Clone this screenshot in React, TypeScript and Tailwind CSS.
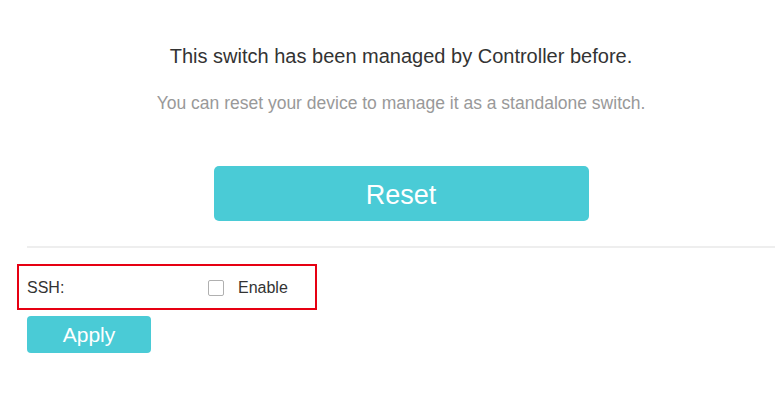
export default function App() {
  return (
    <div className="w-[775px] h-[400px] bg-white font-['Liberation_Sans',Arial,sans-serif] overflow-hidden">
      <div className="pl-[27px] pt-[44px]">
        <div className="flex flex-col items-center">
          <p className="text-[20px] leading-[24px] text-[#333]">
            This switch has been managed by Controller before.
          </p>
          <p className="mt-[24px] text-[17.5px] leading-[22px] text-[#999]">
            You can reset your device to manage it as a standalone switch.
          </p>
          <button className="mt-[52px] w-[375px] h-[55px] pt-[3px] rounded-[5px] bg-[#4acbd6] text-white text-[27px] leading-none">
            Reset
          </button>
        </div>

        <hr className="mt-[25px] border-0 border-t-2 border-[#eeeeee]" />

        <div className="mt-[16px] -ml-[10px] w-[300px] h-[46px] pt-[2px] border-2 border-[#e60012] flex items-center pl-[8px]">
          <span className="w-[181px] text-[16px] text-[#333]">SSH:</span>
          <label className="flex items-center gap-[14px] text-[16px] text-[#333]">
            <span className="w-[16px] h-[16px] rounded-[2px] border border-[#b0b0b0] bg-white" />
            Enable
          </label>
        </div>

        <button className="mt-[6px] w-[124px] h-[37px] pb-[1px] rounded-[4px] bg-[#4acbd6] text-white text-[21px] leading-none">
          Apply
        </button>
      </div>
    </div>
  );
}
